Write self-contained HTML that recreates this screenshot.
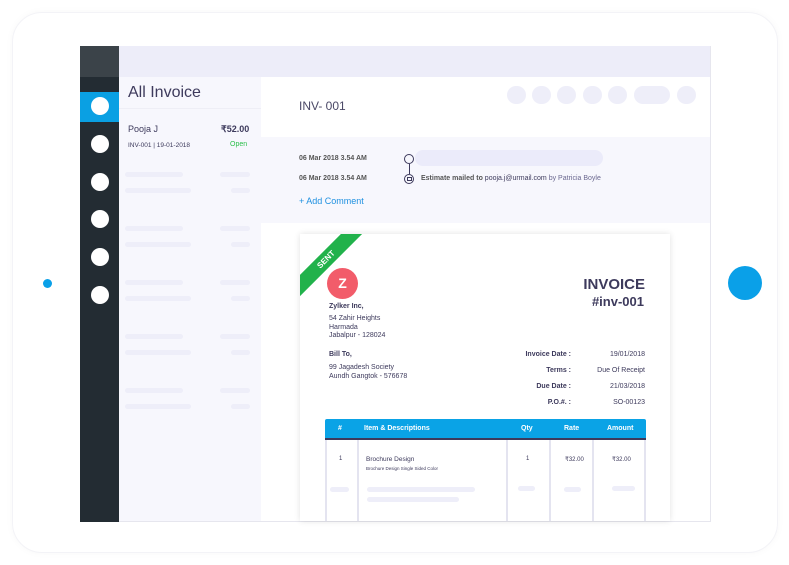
<!DOCTYPE html><html><head><style>
*{margin:0;padding:0;box-sizing:border-box}
body{width:789px;height:565px;background:#fff;font-family:"Liberation Sans",sans-serif;position:relative;overflow:hidden;color:#3d3a5c}
.a{position:absolute}
.ph{position:absolute;background:#eeeef9;border-radius:4px}
.c{position:absolute;width:18px;height:18px;border-radius:50%;background:#fff;left:91px}
.t{position:absolute;font-size:7px;white-space:nowrap}
</style></head><body>
<div class="a" style="left:12px;top:12px;width:766px;height:541px;border:1px solid #f3f3f7;border-radius:30px;box-shadow:0 0 8px rgba(0,0,0,.03)"></div>
<div class="a" style="left:43px;top:279px;width:9px;height:9px;border-radius:50%;background:#0aa0e8"></div>
<div class="a" style="left:728px;top:266px;width:34px;height:34px;border-radius:50%;background:#0aa0e8"></div>
<div class="a" style="left:80px;top:46px;width:631px;height:476px;border:1px solid #e6e6ee;background:#fff"></div>
<div class="a" style="left:80px;top:46px;width:39px;height:476px;background:#232c33"></div>
<div class="a" style="left:80px;top:46px;width:39px;height:31px;background:#3b4349"></div>
<div class="a" style="left:80px;top:92px;width:39px;height:30px;background:#0aa0e3"></div>
<div class="c" style="top:97px"></div><div class="c" style="top:135px"></div><div class="c" style="top:173px"></div><div class="c" style="top:210px"></div><div class="c" style="top:248px"></div><div class="c" style="top:286px"></div>
<div class="a" style="left:119px;top:46px;width:591px;height:31px;background:#ededf9"></div>
<div class="a" style="left:119px;top:77px;width:142px;height:444px;background:#f7f7fd"></div>
<div class="a" style="left:119px;top:108px;width:142px;height:1px;background:#eeeef6"></div>
<div class="a" style="left:128px;top:84px;font-size:16px;color:#3d3a5c">All Invoice</div>
<div class="a" style="left:128px;top:124px;font-size:9px">Pooja J</div>
<div class="a" style="left:221px;top:124px;font-size:9px;font-weight:bold">₹52.00</div>
<div class="t" style="left:128px;top:142px;font-size:6.5px">INV-001 | 19-01-2018</div>
<div class="t" style="left:230px;top:141px;color:#2bbf4a">Open</div>
<div class="ph" style="left:125px;top:172px;width:58px;height:5px"></div><div class="ph" style="left:220px;top:172px;width:30px;height:5px"></div>
<div class="ph" style="left:125px;top:188px;width:66px;height:5px"></div><div class="ph" style="left:231px;top:188px;width:19px;height:5px"></div>
<div class="ph" style="left:125px;top:226px;width:58px;height:5px"></div><div class="ph" style="left:220px;top:226px;width:30px;height:5px"></div>
<div class="ph" style="left:125px;top:242px;width:66px;height:5px"></div><div class="ph" style="left:231px;top:242px;width:19px;height:5px"></div>
<div class="ph" style="left:125px;top:280px;width:58px;height:5px"></div><div class="ph" style="left:220px;top:280px;width:30px;height:5px"></div>
<div class="ph" style="left:125px;top:296px;width:66px;height:5px"></div><div class="ph" style="left:231px;top:296px;width:19px;height:5px"></div>
<div class="ph" style="left:125px;top:334px;width:58px;height:5px"></div><div class="ph" style="left:220px;top:334px;width:30px;height:5px"></div>
<div class="ph" style="left:125px;top:350px;width:66px;height:5px"></div><div class="ph" style="left:231px;top:350px;width:19px;height:5px"></div>
<div class="ph" style="left:125px;top:388px;width:58px;height:5px"></div><div class="ph" style="left:220px;top:388px;width:30px;height:5px"></div>
<div class="ph" style="left:125px;top:404px;width:66px;height:5px"></div><div class="ph" style="left:231px;top:404px;width:19px;height:5px"></div>
<div class="a" style="left:299px;top:99px;font-size:12px;color:#4a4866">INV- 001</div>
<div class="ph" style="left:507px;top:86px;width:19px;height:18px;border-radius:9px"></div>
<div class="ph" style="left:532px;top:86px;width:19px;height:18px;border-radius:9px"></div>
<div class="ph" style="left:557px;top:86px;width:19px;height:18px;border-radius:9px"></div>
<div class="ph" style="left:583px;top:86px;width:19px;height:18px;border-radius:9px"></div>
<div class="ph" style="left:608px;top:86px;width:19px;height:18px;border-radius:9px"></div>
<div class="ph" style="left:634px;top:86px;width:36px;height:18px;border-radius:9px"></div>
<div class="ph" style="left:677px;top:86px;width:19px;height:18px;border-radius:9px"></div>
<div class="a" style="left:261px;top:137px;width:449px;height:86px;background:#f7f7fd"></div>
<div class="t" style="left:299px;top:155px;font-weight:bold;color:#555">06 Mar 2018 3.54 AM</div>
<div class="t" style="left:299px;top:175px;font-weight:bold;color:#555">06 Mar 2018 3.54 AM</div>
<div class="a" style="left:404px;top:154px;width:10px;height:10px;border:1.3px solid #3d3a5c;border-radius:50%"></div>
<div class="a" style="left:408.5px;top:164px;width:1.3px;height:10px;background:#3d3a5c"></div>
<div class="a" style="left:404px;top:174px;width:10px;height:10px;border:1.3px solid #3d3a5c;border-radius:50%"></div>
<div class="a" style="left:406.5px;top:177px;width:5px;height:4px;border:1px solid #3d3a5c"></div>
<div class="a" style="left:415px;top:150px;width:188px;height:16px;border-radius:8px;background:#ebebfa"></div>
<div class="t" style="left:421px;top:175px;font-weight:bold;color:#555">Estimate mailed to <span style="color:#3d3a5c;font-weight:normal">pooja.j@urmail.com</span> <span style="color:#6b6890;font-weight:normal">by Patricia Boyle</span></div>
<div class="a" style="left:299px;top:196px;font-size:9px;color:#1e90e0">+ Add Comment</div>
<div class="a" style="left:300px;top:234px;width:370px;height:287px;background:#fff;box-shadow:0 0 6px rgba(0,0,0,.12);overflow:hidden">
 <div class="a" style="left:-24px;top:18px;width:100px;height:15px;background:#21b24b;transform:rotate(-45deg);color:#fff;font-size:8px;font-weight:bold;text-align:center;line-height:15px">SENT</div>
</div>
<div class="a" style="left:327px;top:268px;width:31px;height:31px;border-radius:50%;background:#f25c6a;color:#fff;font-weight:bold;font-size:14px;text-align:center;line-height:31px">Z</div>
<div class="t" style="left:329px;top:303px;font-weight:bold">Zylker Inc,</div>
<div class="t" style="left:329px;top:315px">54 Zahir Heights</div>
<div class="t" style="left:329px;top:324px">Harmada</div>
<div class="t" style="left:329px;top:332px">Jabalpur - 128024</div>
<div class="a" style="right:144px;top:276px;font-size:15px;font-weight:bold;color:#3d3a5c">INVOICE</div>
<div class="a" style="right:145px;top:294px;font-size:13px;font-weight:bold;color:#3d3a5c">#inv-001</div>
<div class="t" style="left:329px;top:351px;font-weight:bold">Bill To,</div>
<div class="t" style="left:329px;top:364px">99 Jagadesh Society</div>
<div class="t" style="left:329px;top:373px">Aundh Gangtok - 576678</div>
<div class="t" style="right:218px;top:351px;font-weight:bold">Invoice Date :</div><div class="t" style="right:144px;top:351px">19/01/2018</div>
<div class="t" style="right:218px;top:367px;font-weight:bold">Terms :</div><div class="t" style="right:144px;top:367px">Due Of Receipt</div>
<div class="t" style="right:218px;top:383px;font-weight:bold">Due Date :</div><div class="t" style="right:144px;top:383px">21/03/2018</div>
<div class="t" style="right:218px;top:399px;font-weight:bold">P.O.#. :</div><div class="t" style="right:144px;top:399px">SO-00123</div>
<div class="a" style="left:325px;top:419px;width:321px;height:21px;background:#0aa3e6;border-radius:2px 2px 0 0;border-bottom:2px solid #3d3a5c"></div>
<div class="t" style="left:338px;top:425px;color:#fff;font-weight:bold">#</div>
<div class="t" style="left:364px;top:425px;color:#fff;font-weight:bold">Item &amp; Descriptions</div>
<div class="t" style="left:521px;top:425px;color:#fff;font-weight:bold">Qty</div>
<div class="t" style="left:564px;top:425px;color:#fff;font-weight:bold">Rate</div>
<div class="t" style="left:607px;top:425px;color:#fff;font-weight:bold">Amount</div>
<div class="a" style="left:325px;top:440px;width:2px;height:81px;background:#e4e4f0"></div>
<div class="a" style="left:357px;top:440px;width:2px;height:81px;background:#e4e4f0"></div>
<div class="a" style="left:506px;top:440px;width:2px;height:81px;background:#e4e4f0"></div>
<div class="a" style="left:549px;top:440px;width:2px;height:81px;background:#e4e4f0"></div>
<div class="a" style="left:592px;top:440px;width:2px;height:81px;background:#e4e4f0"></div>
<div class="a" style="left:644px;top:440px;width:2px;height:81px;background:#e4e4f0"></div>
<div class="t" style="left:339px;top:456px;font-size:6px">1</div>
<div class="t" style="left:366px;top:456px;font-size:6.5px">Brochure Design</div>
<div class="t" style="left:366px;top:466px;font-size:4.5px">Brochure Design Single Sided Color</div>
<div class="t" style="left:526px;top:456px;font-size:6px">1</div>
<div class="t" style="left:565px;top:456px;font-size:6px">₹32.00</div>
<div class="t" style="left:612px;top:456px;font-size:6px">₹32.00</div>
<div class="ph" style="left:330px;top:487px;width:19px;height:5px"></div>
<div class="ph" style="left:367px;top:487px;width:108px;height:5px"></div>
<div class="ph" style="left:367px;top:497px;width:92px;height:5px"></div>
<div class="ph" style="left:518px;top:486px;width:17px;height:5px"></div>
<div class="ph" style="left:564px;top:487px;width:17px;height:5px"></div>
<div class="ph" style="left:612px;top:486px;width:23px;height:5px"></div>
</body></html>
